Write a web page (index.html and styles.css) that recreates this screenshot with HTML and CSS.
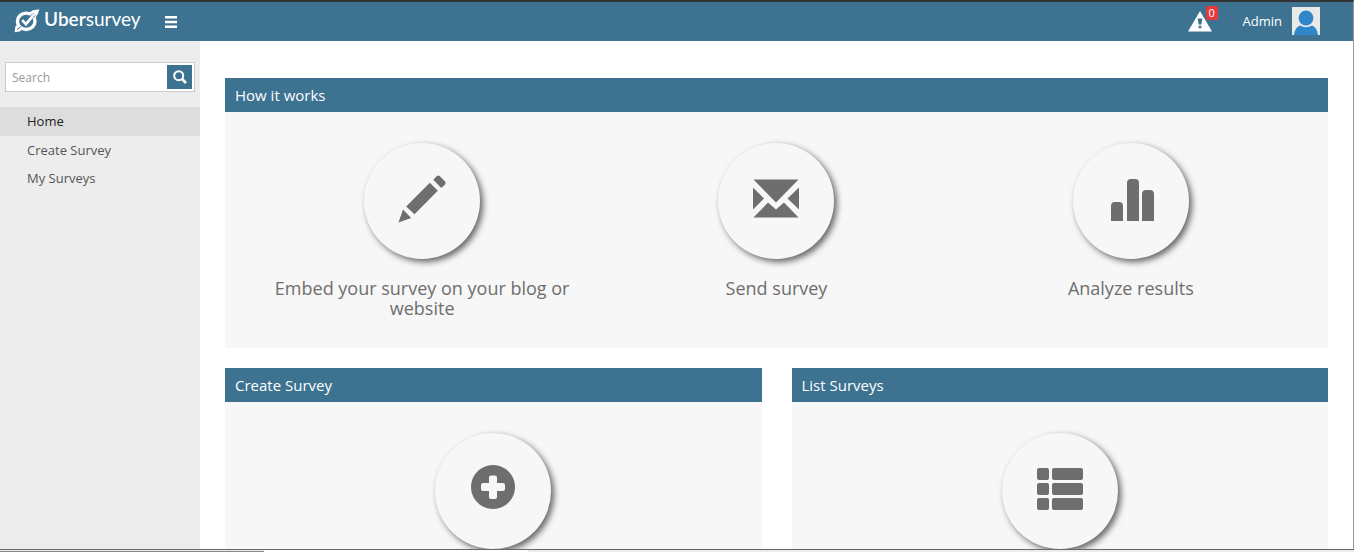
FILE: index.html
```html
<!DOCTYPE html>
<html lang="en">
<head>
<meta charset="utf-8">
<title>Ubersurvey</title>
<link rel="stylesheet" href="styles.css">
</head>
<body>
<header class="topbar">
  <a class="brand" href="#">
    <svg class="brand-mark" viewBox="0 0 26 24" aria-hidden="true">
      <ellipse cx="12.2" cy="12.3" rx="8.8" ry="8.2" fill="none" stroke="#fff" stroke-width="3.4"/>
      <path d="M0.6 23.3 L1.4 17.5 L4 15 L8.5 20.5 L5.5 22.4Z M14.5 4 L19 1.2 L25.400 0.2 L23.8 5 L21 9.5Z" fill="#fff"/>
      <path d="M3 20.5l3.8-2.8M16.2 6.8l3.4-2.2M19.2 9.2l2.2-3.4" fill="none" stroke="#3d7291" stroke-width="1"/>
      <path d="M8.2 11.2l3.7 4 8-9.500" fill="none" stroke="#fff" stroke-width="2.6"/>
    </svg>
    <span class="brand-name"><b>Uber</b>survey</span>
  </a>
  <button class="menu-toggle" type="button" aria-label="Toggle menu">
    <svg viewBox="0 0 12 12" aria-hidden="true"><path d="M0 0h12v2.5H0zM0 4.8h12v2.4H0zM0 9.5h12V12H0z" fill="#fff"/></svg>
  </button>
  <a class="alerts" href="#" aria-label="Alerts">
    <svg viewBox="0 0 24 21" aria-hidden="true">
      <path d="M12 0l12 20.5H0z" fill="#fff"/>
      <path d="M9.6 7.5h4.8l-1 6h-2.8zM10.6 14.8h2.8v2.4h-2.8z" fill="#3d7291"/>
    </svg>
    <span class="badge">0</span>
  </a>
  <a class="user" href="#">
    <span>Admin</span>
    <svg viewBox="0 0 28 28" aria-hidden="true">
      <path d="M0 0h28v28H0z" fill="#e9e9e9"/>
      <circle cx="14" cy="11" r="7.4" fill="#2f87c9"/>
      <path d="M2 28c.6-5.2 3-8.6 6.2-9.5 3.4 2.3 8.2 2.3 11.6 0C23 19.4 25.4 22.8 26 28z" fill="#2f87c9"/>
    </svg>
  </a>
</header>
<div class="layout">
  <aside class="sidebar">
    <form class="search">
      <input type="text" placeholder="Search" aria-label="Search">
      <button type="submit" aria-label="Search">
        <svg viewBox="0 0 14 14" aria-hidden="true"><g fill="none" stroke="#fff"><circle cx="5.7" cy="5.7" r="4.5" stroke-width="2"/><path d="M9 9l4 4" stroke-width="2.6"/></g></svg>
      </button>
    </form>
    <nav class="nav">
      <a class="active" href="#">Home</a>
      <a href="#">Create Survey</a>
      <a href="#">My Surveys</a>
    </nav>
  </aside>
  <main class="content">
    <section class="panel">
      <h2>How it works</h2>
      <div class="panel-body">
        <div class="step">
          <span class="disc"><svg viewBox="0 0 48 48" aria-hidden="true"><path d="M0.5 47.5L5 34.5l8.2 8.500zM8.2 31.5L31.8 7.8l8 8L16.5 39.3zM35.3 4.7l3.6-3.6q1.4-1.2 2.8 0l5.3 5.5q1.2 1.4 0 2.8l-3.7 3.500z"/></svg></span>
          <p>Embed your survey on your blog or website</p>
        </div>
        <div class="step">
          <span class="disc"><svg viewBox="0 0 48 48" aria-hidden="true"><path d="M1.5 4.5H46.5L24 27.5zM1 12.5L12 23.5 1 34.5zM47 12.5L35.5 23.5 47 34.5zM1.5 42.5L16 27.5l8 7 8-7 14.5 15z"/></svg></span>
          <p>Send survey</p>
        </div>
        <div class="step">
          <span class="disc"><svg viewBox="0 0 48 48" aria-hidden="true"><path d="M4 46V31q0-4 4-4h4q4 0 4 4v15zM20 46V8q0-4 4-4h4q4 0 4 4v38zM35 46V19q0-4 4-4h4q4 0 4 4v27z"/></svg></span>
          <p>Analyze results</p>
        </div>
      </div>
    </section>
    <div class="pair">
      <section class="panel">
        <h2>Create Survey</h2>
        <div class="panel-body">
          <a class="step" href="#" aria-label="Create Survey"><span class="disc"><svg viewBox="0 0 48 48" aria-hidden="true"><path fill-rule="evenodd" d="M24 0a22 22 0 1 0 .01 0zM22 10.5h4q2 0 2 2V18h6q2 0 2 2v4q0 2-2 2h-6v6q0 2-2 2h-4q-2 0-2-2v-6h-6q-2 0-2-2v-4q0-2 2-2h6v-5.5q0-2 2-2z"/></svg></span></a>
        </div>
      </section>
      <section class="panel">
        <h2>List Surveys</h2>
        <div class="panel-body">
          <a class="step" href="#" aria-label="List Surveys"><span class="disc"><svg viewBox="0 0 48 48" aria-hidden="true"><rect x="1" y="3" width="12" height="12" rx="2"/><rect x="16" y="3" width="31" height="12" rx="2"/><rect x="1" y="18" width="12" height="12" rx="2"/><rect x="16" y="18" width="31" height="12" rx="2"/><rect x="1" y="33" width="12" height="12" rx="2"/><rect x="16" y="33" width="31" height="12" rx="2"/></svg></span></a>
        </div>
      </section>
    </div>
  </main>
</div>
<div class="taskbar"><span class="task"></span><span class="task-idle"></span></div>
</body>
</html>
```
FILE: styles.css
```css
* { box-sizing: border-box; }
body {
  margin: 0;
  height: 100vh;
  display: flex;
  flex-direction: column;
  overflow: hidden;
  background: #fff;
  color: #555;
  font: 13px/20px "Open Sans", "Noto Sans", sans-serif;
}
a { color: inherit; text-decoration: none; }
button { border: 0; padding: 0; cursor: pointer; }
svg { display: block; }

.topbar {
  flex: none;
  display: flex;
  align-items: center;
  height: 41px;
  padding: 0 33px 0 14px;
  border-top: 2px solid #333;
  border-right: 1px solid #999;
  background: #3d7291;
  color: #fff;
}
.brand { display: flex; align-items: center; gap: 4px; width: 151px; padding-bottom: 2px; }
.brand-mark { width: 26px; height: 24px; }
.brand-name { font: 19px/24px Lato, sans-serif; padding-bottom: 4px; }
.brand-name b { font-weight: 600; }
.menu-toggle { background: none; }
.menu-toggle svg { width: 12px; height: 12px; }
.alerts { position: relative; margin-left: auto; }
.alerts svg { width: 24px; height: 21px; }
.badge {
  position: absolute;
  top: -5px;
  right: -6px;
  width: 12px;
  border-radius: 2px;
  background: #e4393e;
  font-size: 11px;
  line-height: 14px;
  text-align: center;
}
.user { display: flex; align-items: center; gap: 10px; margin-left: 31px; padding-bottom: 2px; }
.user svg { width: 28px; height: 28px; }

.layout { flex: 1; min-height: 0; display: flex; border-right: 1px solid #999; }
.sidebar { flex: none; width: 200px; padding-top: 21px; background: #ededed; }
.search {
  display: flex;
  height: 30px;
  margin: 0 5px 15px;
  padding: 2px;
  border: 1px solid #ccc;
  background: #fff;
}
.search input {
  flex: 1;
  min-width: 0;
  border: 0;
  padding: 2px 4px 0;
  background: none;
  font: 12px/20px "Open Sans", sans-serif;
  outline: 0;
}
.search input::placeholder { color: #999; }
.search button {
  display: grid;
  place-items: center;
  width: 25px;
  height: 24px;
  background: #3d7291;
}
.search svg { width: 14px; height: 14px; }
.nav a { display: block; padding: 4px 27px; }
.nav .active { padding-bottom: 5px; background: #ddd; color: #222; }

.content {
  flex: 1;
  min-width: 0;
  display: flex;
  flex-direction: column;
  gap: 20px;
  padding: 37px 25px 0;
  overflow: hidden;
}
.panel { background: #f7f7f7; }
.panel h2 {
  margin: 0;
  padding: 7px 10px;
  background: #3d7291;
  color: #fff;
  font-size: 15px;
  font-weight: 400;
  line-height: 20px;
}
.panel-body { display: flex; padding: 31px 20px 30px; }
.step {
  flex: 1;
  display: flex;
  flex-direction: column;
  align-items: center;
  gap: 19px;
  padding: 0 15px;
}
.step p { margin: 0; color: #6e6e6e; font-size: 18px; line-height: 20px; text-align: center; }
.disc {
  display: grid;
  place-items: center;
  width: 116px;
  height: 116px;
  padding-bottom: 4px;
  border-radius: 50%;
  background: #f7f7f7;
  box-shadow: 3px 3px 6px #666;
}
.disc svg { width: 48px; height: 48px; fill: #6e6e6e; }
.pair { display: grid; grid-template-columns: 1fr 1fr; gap: 30px; }

.taskbar {
  flex: none;
  display: flex;
  height: 3px;
  border-top: 1px solid #666;
  background: #ededed;
}
.task { width: 264px; border-bottom: 1px solid #888; }
.task-idle { width: 264px; background: #fff; }
```
